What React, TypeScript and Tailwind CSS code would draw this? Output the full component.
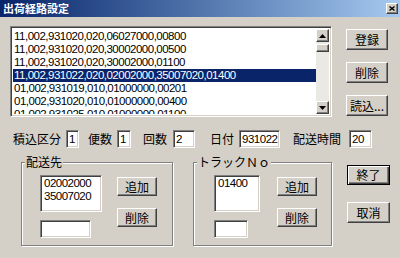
import React from "react";

// Win2000風のダイアログ「出荷経路設定」
const jp = "[font-family:'Noto_Sans_CJK_JP',sans-serif] text-[12px]";
const num = "[font-family:'Liberation_Sans',sans-serif] text-[11.5px] tracking-[-0.5px]";

const sunken =
  "bg-white border border-t-[#808080] border-l-[#808080] border-r-white border-b-white shadow-[inset_1px_1px_0_#404040,inset_-1px_-1px_0_#d4d0c8]";
const raised =
  "bg-[#d4d0c8] border border-t-white border-l-white border-r-[#404040] border-b-[#404040] shadow-[inset_-1px_-1px_0_#808080]";

const rows = [
  "11,002,931020,020,06027000,00800",
  "11,002,931020,020,30002000,00500",
  "11,002,931020,020,30002000,01100",
  "11,002,931022,020,02002000,35007020,01400",
  "01,002,931019,010,01000000,00201",
  "01,002,931020,010,01000000,00400",
  "01,002,931025,010,01000000,01100",
];

function Btn({ label, className = "" }: { label: string; className?: string }) {
  return (
    <button className={`${raised} ${jp} flex items-center justify-center leading-none text-black ${className}`}>
      {label}
    </button>
  );
}

function Arrow({ down }: { down?: boolean }) {
  return (
    <div className={`${raised} h-[13px] flex items-center justify-center`}>
      <svg width="7" height="4" viewBox="0 0 7 4">
        <polygon points={down ? "0,0 7,0 3.5,4" : "0,4 7,4 3.5,0"} fill="#000" />
      </svg>
    </div>
  );
}

function Field({ value, className = "" }: { value?: string; className?: string }) {
  return (
    <div className={`${sunken} ${num} h-[18px] pl-[3px] leading-[16px] text-black ${className}`}>{value}</div>
  );
}

function Group({
  title,
  width,
  listW,
  inputW,
  items,
  gap,
  pad,
}: {
  title: string;
  width: string;
  listW: string;
  inputW: string;
  items: string[];
  gap: string;
  pad: string;
}) {
  return (
    <fieldset
      className={`${width} h-[91px] border border-[#808080] shadow-[inset_1px_1px_0_#fff,1px_1px_0_#fff] p-0 m-0`}
    >
      <legend className={`${jp} ml-[3px] px-[1px] leading-[14px] bg-[#d4d0c8] text-black`}>{title}</legend>
      <div className={`flex ${pad} pt-[6px]`}>
        <div className="flex flex-col gap-[8px]">
          <div className={`${sunken} ${listW} h-[37px] px-[3px] pt-[1px]`}>
            {items.map((t) => (
              <div key={t} className={`${num} leading-[13px] text-black`}>
                {t}
              </div>
            ))}
          </div>
          <Field className={inputW} />
        </div>
        <div className={`flex flex-col ${gap} pt-[2px] gap-[12px]`}>
          <Btn label="追加" className="w-[40px] h-[19px]" />
          <Btn label="削除" className="w-[40px] h-[19px]" />
        </div>
      </div>
    </fieldset>
  );
}

export default function App() {
  return (
    <div className="w-[400px] h-[258px] bg-[#d4d0c8] overflow-hidden flex flex-col">
      {/* タイトルバー */}
      <div className="h-[17px] bg-linear-to-r from-[#0a246a] to-[#a6caf0] flex items-center justify-between pl-[3px] pr-[2px]">
        <span className="[font-family:'Noto_Sans_CJK_JP',sans-serif] text-[11px] font-bold text-white leading-none">
          出荷経路設定
        </span>
        <div className={`${raised} w-[12px] h-[11px] flex items-center justify-center`}>
          <svg width="6" height="5" viewBox="0 0 6 5">
            <path d="M0.5 0.5 L5.5 4.5 M5.5 0.5 L0.5 4.5" stroke="#000" strokeWidth="1.4" />
          </svg>
        </div>
      </div>

      {/* 一覧と右ボタン */}
      <div className="flex pl-[10px] mt-[9px]">
        <div className={`${sunken} w-[322px] h-[91px] flex p-[2px]`}>
          <div className="flex-1 overflow-hidden pt-[1px]">
            {rows.map((r, i) => (
              <div
                key={r}
                className={`${num} h-[13px] leading-[13px] pl-[1px] whitespace-nowrap ${
                  i === 3 ? "bg-[#0a246a] text-white" : "text-black"
                }`}
              >
                {r}
              </div>
            ))}
          </div>
          <div className="w-[13px] flex flex-col bg-[#ebe9e4]">
            <Arrow />
            <div className={`${raised} h-[8px] mt-[2px]`} />
            <div className="flex-1" />
            <Arrow down />
          </div>
        </div>
        <div className="flex flex-col gap-[12px] ml-[14px] pt-[3px]">
          <Btn label="登録" className="w-[42px] h-[21px]" />
          <Btn label="削除" className="w-[42px] h-[21px]" />
          <Btn label="読込..." className="w-[42px] h-[21px]" />
        </div>
      </div>

      {/* 条件入力 */}
      <div className={`${jp} flex items-center mt-[13px] pl-[13px] text-black leading-[18px]`}>
        <span>積込区分</span>
        <Field value="1" className="ml-[5px] w-[13px] !pl-[2px]" />
        <span className="ml-[9px]">便数</span>
        <Field value="1" className="ml-[5px] w-[14px] !pl-[2px]" />
        <span className="ml-[12px]">回数</span>
        <Field value="2" className="ml-[6px] w-[22px] !pl-[2px]" />
        <span className="ml-[15px]">日付</span>
        <Field value="931022" className="ml-[5px] w-[41px] !pl-[2px]" />
        <span className="ml-[13px]">配送時間</span>
        <Field value="20" className="ml-[8px] w-[23px] !pl-[2px]" />
      </div>

      {/* 配送先 / トラックNo */}
      <div className="flex mt-[7px] pl-[21px]">
        <Group
          title="配送先"
          width="w-[152px]"
          listW="w-[62px]"
          inputW="w-[51px]"
          items={["02002000", "35007020"]}
          gap="ml-[15px]"
          pad="pl-[18px]"
        />
        <div className="ml-[20px]">
          <Group
            title="トラックＮｏ"
            width="w-[139px]"
            listW="w-[46px]"
            inputW="w-[34px]"
            items={["01400"]}
            gap="ml-[17px]"
            pad="pl-[20px]"
          />
        </div>
        <div className="flex flex-col ml-[15px] pt-[10px] gap-[17px]">
          <button
            className={`${jp} w-[43px] h-[20px] bg-[#d4d0c8] border border-black shadow-[inset_1px_1px_0_#fff,inset_-1px_-1px_0_#404040,inset_-2px_-2px_0_#808080] flex items-center justify-center leading-none text-black`}
          >
            終了
          </button>
          <Btn label="取消" className="w-[43px] h-[21px]" />
        </div>
      </div>
    </div>
  );
}
